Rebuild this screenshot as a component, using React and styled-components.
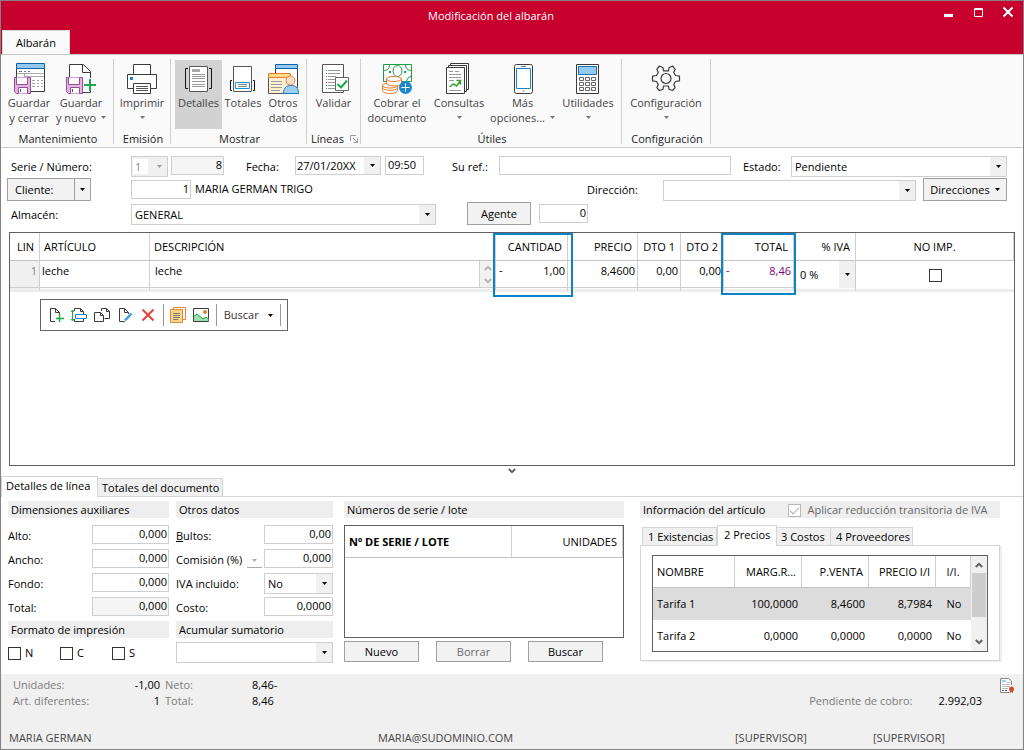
import React from "react";
import styled, { createGlobalStyle, css } from "styled-components";

const GlobalStyle = createGlobalStyle`
  *, *::before, *::after { box-sizing: border-box; }
  body { margin: 0; background: #fff; }
  body, button, input, select, textarea, table {
    font-family: "Open Sans", "Noto Sans", sans-serif;
    font-size: 11px;
    line-height: 16px;
    color: #000;
  }
  button, input, select, textarea { margin: 0; border-radius: 0; }
`;

const Window = styled.main`
  min-height: 100vh;
  display: flex;
  flex-direction: column;
  border: 1px solid #828282;
  background: #fff;
`;

/* ---------- title bar ---------- */
const TitleBar = styled.header`
  height: 53px;
  display: grid;
  grid-template-columns: 1fr auto 1fr;
  background: #c8002d;
`;
const Title = styled.h1`
  margin: 7px 0 0 0;
  padding-right: 42px;
  font-size: 11px;
  font-weight: 400;
  line-height: 16px;
  color: #fff;
`;
const RibbonTab = styled.button`
  align-self: end;
  justify-self: start;
  height: 24px;
  width: 68px;
  margin-left: 1px;
  padding: 0;
  border: 1px solid #d8d8d8;
  border-bottom: 0;
  background: #fafafa;
`;
const WindowButtons = styled.div`
  display: flex;
  justify-content: flex-end;
  gap: 12px;
  padding: 3px 6px 0 0;
  height: 22px;
`;
const WindowButton = styled.button`
  width: 18px;
  height: 18px;
  padding: 0;
  border: 0;
  background: transparent;
  svg { display: block; }
`;

/* ---------- ribbon ---------- */
const Ribbon = styled.nav`
  display: flex;
  height: 94px;
  padding-top: 4px;
  border-top: 1px solid #c9c9c9;
  border-bottom: 1px solid #c9c9c9;
  background: #fafafa;
`;
const Group = styled.section`
  display: flex;
  flex-direction: column;
  height: 85px;
  border-right: 1px solid #cfcfcf;
`;
const GroupButtons = styled.div`
  flex: none;
  display: flex;
  justify-content: center;
  padding: 1px ${(p) => p.$right || 0}px 0 ${(p) => p.$left || 0}px;
  height: 72px;
`;
const GroupTitle = styled.div`
  flex: none;
  display: flex;
  align-items: center;
  justify-content: center;
  gap: 6px;
  height: 16px;
  padding-left: 2px;
  color: #222;
`;
const BigButton = styled.button`
  width: ${(p) => p.$width}px;
  height: 69px;
  padding: 2px 0 0;
  display: flex;
  flex-direction: column;
  align-items: center;
  border: 0;
  background: ${(p) => (p.$active ? "#d2d2d2" : "transparent")};
  color: #444;
  line-height: 15px;
  white-space: nowrap;
  svg { display: block; flex: none; }
`;
const BigIcon = styled.span`
  height: 33px;
`;
const CaptionLine = styled.span`
  display: flex;
  align-items: center;
  gap: 5px;
  height: 15px;
`;

/* ---------- form controls ---------- */
const Field = styled.input`
  width: ${(p) => (p.$width ? `${p.$width}px` : "100%")};
  height: 19px;
  min-width: 0;
  padding: 0 1px 2px 2px;
  border: 1px solid #cfcfcf;
  background: ${(p) => (p.$muted ? "#f5f5f5" : "#fff")};
  text-align: ${(p) => p.$align || "left"};
  outline: 0;
`;
const SelectBox = styled.span`
  position: relative;
  display: inline-flex;
  flex: ${(p) => (p.$width ? "none" : "1")};
  width: ${(p) => (p.$width ? `${p.$width}px` : "auto")};
  height: ${(p) => p.$height || 21}px;
  border: ${(p) => (p.$bare ? "0" : "1px solid #cfcfcf")};
  background: ${(p) => (p.$disabled ? "#f0f0f0" : "#fff")};
`;
const NativeSelect = styled.select`
  appearance: none;
  flex: 1;
  min-width: 0;
  height: 100%;
  padding: 0 18px 0 ${(p) => p.$pad ?? 3}px;
  border: 0;
  background: linear-gradient(#f0f0f0, #f0f0f0) right / 16px 100% no-repeat transparent;
  outline: 0;
  opacity: 1;
  ${(p) => p.disabled && css`
    color: #8a8a8a;
    background: linear-gradient(#fff, #fff) 1px 2px / 15px 15px no-repeat transparent;
  `}
`;
const ArrowSlot = styled.span`
  position: absolute;
  top: 0;
  right: 0;
  width: 16px;
  height: 100%;
  display: flex;
  align-items: center;
  justify-content: center;
  pointer-events: none;
`;
const PushButton = styled.button`
  width: ${(p) => p.$width}px;
  height: ${(p) => p.$height || 23}px;
  padding: 0;
  display: inline-flex;
  align-items: center;
  justify-content: center;
  gap: 5px;
  border: 1px solid #a0a0a0;
  background: #f2f2f2;
  color: ${(p) => (p.disabled ? "#6b6b6b" : "#000")};
`;
const SplitButton = styled.div`
  display: inline-flex;
  width: 84px;
  height: 23px;
  border: 1px solid #a0a0a0;
  background: #f2f2f2;
`;
const SplitPart = styled.button`
  flex: ${(p) => (p.$main ? "1" : "0 0 16px")};
  display: flex;
  align-items: center;
  justify-content: ${(p) => (p.$main ? "flex-start" : "center")};
  padding: 0 0 0 ${(p) => (p.$main ? 7 : 0)}px;
  border: 0;
  border-left: ${(p) => (p.$main ? "0" : "1px solid #a0a0a0")};
  background: transparent;
`;
const Check = styled.input`
  appearance: none;
  flex: none;
  width: 13px;
  height: 13px;
  border: 1px solid #333;
  background: #fff;
  &:disabled { border-color: #b8b8b8; }
  &:checked::after {
    content: "";
    display: block;
    width: 9px;
    height: 5px;
    margin: 2px 0 0 1px;
    border: solid #aaa;
    border-width: 0 0 1px 1px;
    transform: rotate(-45deg);
  }
`;

/* ---------- document header form ---------- */
const DocForm = styled.form`
  padding: 7px 16px 0 6px;
  display: flex;
  flex-direction: column;
`;
const FormRow = styled.div`
  display: flex;
  align-items: flex-start;
  height: ${(p) => p.$height}px;
`;
const FormLabel = styled.label`
  flex: none;
  width: ${(p) => p.$width}px;
  padding: ${(p) => p.$top ?? 4}px 0 0 4px;
  white-space: nowrap;
`;
const Gap = styled.span`
  flex: ${(p) => (p.$grow ? `1 0 ${p.$size}px` : `0 0 ${p.$size}px`)};
`;
const Slot = styled.span`
  display: flex;
  flex: ${(p) => (p.$grow ? `${p.$grow} 1 0` : "none")};
  min-width: 0;
  padding-top: ${(p) => p.$top || 0}px;
`;
const CustomerName = styled.output`
  padding: 3px 0 0 4px;
  white-space: nowrap;
`;

/* ---------- line grid ---------- */
const LinesPanel = styled.section`
  flex: 1;
  margin: 5px 8px 0 8px;
  border: 1px solid #606060;
  min-height: 200px;
`;
const DataTable = styled.table`
  width: 100%;
  table-layout: fixed;
  border-collapse: separate;
  border-spacing: 0;
`;
const HeadCell = styled.th`
  position: relative;
  height: ${(p) => (p.$tall ? 32 : 28)}px;
  padding: 0 ${(p) => (p.$align === "right" ? 5 : 4)}px 0 4px;
  border-right: 1px solid #cfcfcf;
  border-bottom: 1px solid #c4c4c4;
  font-weight: ${(p) => (p.$bold ? 700 : 400)};
  text-align: ${(p) => p.$align || "left"};
  white-space: nowrap;
`;
const Highlight = styled.span`
  position: absolute;
  top: 0;
  left: -3px;
  right: ${(p) => p.$right}px;
  height: ${(p) => p.$height}px;
  border: 2px solid #0b84c6;
  pointer-events: none;
  z-index: 1;
`;
const LineCell = styled.td`
  height: 30px;
  padding: 0;
  border-right: ${(p) => (p.$open ? "0" : "1px solid #cfcfcf")};
  border-bottom: 3px solid #ededed;
  vertical-align: top;
  background: ${(p) => (p.$muted ? "#f0f0f0" : "#fff")};
`;
const CellEdit = styled.span`
  display: flex;
  height: 27px;
  padding: 1px 2px 0 2px;
  border-bottom: 1px solid #cfcfcf;
  color: ${(p) => p.$color || "#000"};
`;
const CellInput = styled.input`
  flex: 1;
  min-width: 0;
  width: 20px;
  height: 17px;
  padding: 0;
  border: 0;
  outline: 0;
  background: transparent;
  color: inherit;
  text-align: ${(p) => p.$align || "left"};
`;
const CellSelect = styled.span`
  display: flex;
  height: 27px;
`;
const CellCheck = styled.span`
  display: flex;
  align-items: center;
  justify-content: center;
  height: 28px;
`;
const Stepper = styled.span`
  flex: 0 0 16px;
  display: flex;
  flex-direction: column;
  align-items: center;
  justify-content: space-around;
  margin: -1px -2px 0 0;
  border-left: 1px solid #cfcfcf;
  background: #f2f2f2;
`;
const LineTools = styled.div`
  display: inline-flex;
  align-items: center;
  height: 32px;
  width: 248px;
  margin: 7px 0 0 30px;
  padding: 0 7px;
  gap: 7px;
  border: 1px solid #666;
`;
const ToolButton = styled.button`
  height: 20px;
  padding: 0;
  display: flex;
  align-items: center;
  gap: 9px;
  border: 0;
  background: transparent;
  color: #333;
`;
const ToolDivider = styled.span`
  width: 1px;
  height: 22px;
  background: #999;
`;
const Splitter = styled.div`
  display: flex;
  justify-content: center;
  align-items: center;
  height: 10px;
`;

/* ---------- bottom panels ---------- */
const Tabs = styled.div`
  display: flex;
  flex: none;
  align-items: flex-end;
  height: 21px;
  padding-left: ${(p) => p.$left || 0}px;
  ${(p) => p.$line && css`box-shadow: inset 0 -1px #d5d5d5;`}
`;
const Tab = styled.button`
  position: relative;
  z-index: ${(p) => (p.$active ? 1 : 0)};
  height: ${(p) => (p.$active ? 21 : 19)}px;
  width: ${(p) => p.$width}px;
  padding: 0 0 ${(p) => (p.$active ? 2 : 0)}px ${(p) => p.$pad ?? 4}px;
  border: 1px solid #d5d5d5;
  border-left-width: ${(p) => (p.$first || p.$active ? 1 : 0)}px;
  border-bottom: ${(p) => (p.$active ? "0" : "1px solid #d5d5d5")};
  background: ${(p) => (p.$active ? "#fff" : "#f0f0f0")};
  text-align: left;
  white-space: nowrap;
`;
const Panels = styled.div`
  display: grid;
  grid-template-columns: 161fr 164fr 291fr 376fr;
  padding: 4px 23px 12px 7px;
  height: 177px;
`;
const Panel = styled.section`
  display: flex;
  flex-direction: column;
  min-width: 0;
  margin-left: ${(p) => p.$left || 0}px;
`;
const PanelTitle = styled.h2`
  display: flex;
  flex: none;
  align-items: center;
  height: 17px;
  margin: 0 0 ${(p) => p.$bottom ?? 7}px;
  padding: 1px 0 0 3px;
  background: #eee;
  font-size: 11px;
  font-weight: 400;
  line-height: 16px;
  white-space: nowrap;
`;
const DetailRow = styled.div`
  display: flex;
  align-items: flex-start;
  height: 24px;
`;
const DetailLabel = styled.label`
  flex: 1;
  padding-top: 3px;
  white-space: nowrap;
`;
const UnitMenu = styled.button`
  width: 15px;
  height: 19px;
  margin-right: 2px;
  padding: 0;
  border: 0;
  border-bottom: 1px solid #aaa;
  background: transparent;
`;
const CheckRow = styled.div`
  display: grid;
  grid-template-columns: repeat(3, 52px);
`;
const CheckLabel = styled.label`
  display: flex;
  align-items: center;
  gap: ${(p) => (p.$muted ? 6 : 4)}px;
  color: ${(p) => (p.$muted ? "#666" : "#000")};
`;
const SeriesBox = styled.div`
  height: 113px;
  border: 1px solid #606060;
`;
const ButtonRow = styled.div`
  display: flex;
  gap: 17px;
  padding-top: 3px;
`;
const TabPage = styled.div`
  height: 116px;
  margin-top: -1px;
  padding: 9px 11px 0 11px;
  border: 1px solid #d5d5d5;
  box-shadow: 2px 1px #eee;
`;
const PriceBox = styled.div`
  display: flex;
  height: 97px;
  border: 1px solid #606060;
  overflow: hidden;
`;
const PriceRow = styled.tr`
  background: ${(p) => (p.$selected ? "#dcdcdc" : "#fff")};
`;
const PriceCell = styled.td`
  height: 32px;
  padding: 0 ${(p) => (p.$align === "right" ? 4 : 3)}px 0 4px;
  text-align: ${(p) => p.$align || "left"};
  white-space: nowrap;
`;
const ScrollBar = styled.div`
  flex: 0 0 16px;
  display: flex;
  flex-direction: column;
  align-items: center;
  padding-bottom: 6px;
  background: #f0f0f0;
`;
const ScrollThumb = styled.span`
  width: 14px;
  height: 44px;
  margin-bottom: auto;
  background: #cdcdcd;
`;
const ScrollArrow = styled.span`
  display: flex;
  align-items: center;
  height: ${(p) => p.$height}px;
`;

/* ---------- status area ---------- */
const Footer = styled.footer`
  height: 75px;
  padding: 3px 8px 0 12px;
  display: flex;
  flex-direction: column;
  background: #f0f0f0;
`;
const Summary = styled.div`
  display: flex;
  justify-content: space-between;
`;
const SummaryGrid = styled.dl`
  display: grid;
  grid-template-columns: 108px 39px 92px 40px;
  margin: 0;
`;
const Term = styled.dt`
  padding-left: ${(p) => p.$left || 0}px;
  color: #7b7b7b;
`;
const Amount = styled.dd`
  margin: 0;
  text-align: ${(p) => p.$align || "left"};
`;
const Pending = styled.dl`
  display: flex;
  gap: 26px;
  margin: 16px 0 0;
`;
const PendingArea = styled.div`
  display: flex;
  align-items: flex-start;
  gap: 17px;
`;
const Session = styled.div`
  display: grid;
  grid-template-columns: 369fr 357fr 138fr 142fr;
  margin: 21px 0 0 -4px;
  color: #444;
`;

/* ---------- icons ---------- */
const Caret = ({ color = "#000" }) => (
  <svg width="5" height="3" viewBox="0 0 5 3" aria-hidden="true">
    <path d="M0 0h5L2.5 3z" fill={color} />
  </svg>
);
const Chevron = ({ up, color = "#606060" }) => (
  <svg width="8" height="6" viewBox="0 0 8 6" fill="none" stroke={color} strokeWidth="2" aria-hidden="true">
    <path d={up ? "M.8 5L4 1.8L7.2 5" : "M.8 1L4 4.2L7.2 1"} />
  </svg>
);
const Svg = ({ children, size = 32 }) => (
  <svg width={size} height={size} viewBox={`0 0 ${size} ${size}`} fill="none" stroke="#3b3b3b" aria-hidden="true">
    {children}
  </svg>
);
const Disk = () => (
  <g stroke="#9b4a9e">
    <path d="M1.5 15.5h16v16h-14l-2-2z" fill="#ddb7dd" />
    <path d="M3.5 15.5v7h11v-7M5.5 31.500v-6h9v6" fill="#fff" />
    <path d="M7.500 27v3" stroke="#555" />
  </g>
);
const SaveCloseIcon = () => (
  <Svg>
    <path d="M3.5 6.500h28v23h-28z" fill="#fff" />
    <path d="M3.500 1.500h28v5h-28z" fill="#94c9f0" stroke="#0c61ab" />
    <path d="M6 9.500h3m2 0h2m2 0h2" stroke="#777" />
    <path d="M4 11.500h27M11.500 11.500v5M11 14.500h20" stroke="#aaa" />
    <path d="M19 18.500h3m2 0h2m2 0h2M19 21.500h3m2 0h2m2 0h2M19 24.500h3m2 0h2m2 0h2" stroke="#aaa" />
    <Disk />
  </Svg>
);
const SaveNewIcon = () => (
  <Svg>
    <path d="M4.500 2.500h14l7 7v21h-21z" fill="#fff" />
    <path d="M17.500 2.500v8h8" />
    <path d="M21 16h9v13h-9z" fill="#fafafa" stroke="none" />
    <Disk />
    <path d="M25 17v12M19 23h12" stroke="#1ba94c" strokeWidth="2" />
  </Svg>
);
const PrintIcon = () => (
  <Svg>
    <path d="M7.500 12.500v-10h17v10" fill="#fff" />
    <path d="M7.500 26.500h-6v-14h29v14h-6" fill="#fff" />
    <path d="M7.500 21.500h17v10h-17z" fill="#fff" />
    <path d="M10 24.500h12m-12 2h12m-12 2h12" stroke="#555" />
    <path d="M4 15h3v3H4z" fill="#1b83cb" stroke="none" />
  </Svg>
);
const DetailsIcon = () => (
  <Svg>
    <path d="M6.500 4.500h18v25h-18z" fill="#fff" stroke="#555" />
    <path d="M9 7h8v3H9z" fill="#aaa" stroke="none" />
    <path d="M9 12.500h13m-13 2h13m-13 2h13m-13 3h13m-13 3h13m-13 2h13" stroke="#999" />
    <path d="M5 6.500H2.500v20H5M26 6.500h2.500v20H26" stroke="#111" />
  </Svg>
);
const TotalsIcon = () => (
  <Svg>
    <path d="M6.500 4.500h18v25h-18z" fill="#fff" stroke="#555" />
    <path d="M8.500 20.500h14v6h-14z" stroke="#1592d8" />
    <path d="M11 22.500h9m-9 2h9" stroke="#888" />
    <path d="M5 18.500H3.500v10H5M26 18.500h1.500v10H26" stroke="#111" />
  </Svg>
);
const OtherDataIcon = () => (
  <Svg>
    <path d="M8.500 6.500h22v19h-22z" fill="#fff" />
    <path d="M8.500 2.500h22v4h-22z" fill="#94c9f0" stroke="#0c61ab" />
    <path d="M1.500 15.500h21v16h-21z" fill="#fcefd3" stroke="#555" />
    <path d="M1.500 11.500h22v4h-22z" fill="#fadb87" stroke="#e77c2e" />
    <path d="M4 19.500h11m-11 3h11m-11 3h11m-11 3h9" stroke="#999" />
    <path d="M16.500 31.500c0-6 3-8 7.500-8s7.500 2 7.500 8z" fill="#9fd0f2" stroke="#1b78bd" />
    <circle cx="23.500" cy="18.500" r="4.500" fill="#fcdcc0" stroke="#d48d57" />
  </Svg>
);
const ValidateIcon = () => (
  <Svg>
    <path d="M4.500 2.500h21v28h-21z" fill="#fff" stroke="#555" />
    <path d="M10 8.500h12m-12 3h12m-12 3h8m-8 3h7m-7 3h7m-7 3h7m-7 3h7" stroke="#999" />
    <path d="M8.500 8v1m0 5v1m0 2v1m0 5v1m0 2v1" stroke="#1ba94c" />
    <path d="M8.500 11v1m0 8v1" stroke="#d13438" />
    <path d="M17.500 15.500h13v13h-13z" fill="#fff" stroke="#666" />
    <path d="M19.500 22l3.500 3.500l6-7" stroke="#1ba94c" strokeWidth="2" />
  </Svg>
);
const CashIcon = () => (
  <Svg>
    <path d="M2.500 2.500h28v17h-28z" fill="#fff" stroke="#1b9e4b" />
    <path d="M2.500 8.500q6 0 6-6m16 0q0 6 6 6M30.500 14q-4 1-5 5" stroke="#1b9e4b" />
    <ellipse cx="16.500" cy="9" rx="4.500" ry="5.500" stroke="#1b9e4b" />
    <path d="M8 10h2m13 0h2" stroke="#1b9e4b" strokeWidth="2" />
    <g fill="#fff" stroke="#e77c2e">
      <path d="M1.500 23v5.500c0 4 15 4 15 0V23z" />
      <path d="M1.500 26c1 3 14 3 15 0" />
      <ellipse cx="9" cy="23.500" rx="7.500" ry="2.500" />
      <path d="M5.500 17v4c0 4 15 4 15 0v-4z" />
      <ellipse cx="13" cy="17" rx="7.500" ry="2.500" />
    </g>
    <circle cx="24.500" cy="25.500" r="6.500" fill="#1b87d0" stroke="none" />
    <path d="M24.500 21.500v8m-4-4h8" stroke="#fff" />
  </Svg>
);
const QueriesIcon = () => (
  <Svg>
    <path d="M7.500 1.500h18v26h-18z" fill="#fff" />
    <path d="M5.500 3.500h18v26h-18z" fill="#fff" />
    <path d="M3.500 5.500h18v26h-18z" fill="#fff" />
    <path d="M6 9.500h4m2 0h4M6 12.500h12M6 15.500h12M6 18.500h5M6 28.500h12" stroke="#999" />
    <path d="M6.500 25l4-3l3 2l4-5m-4-.5h4v4" stroke="#2ea02c" strokeWidth="1.500" />
  </Svg>
);
const PhoneIcon = () => (
  <Svg>
    <rect x="7.500" y="2.500" width="18" height="29" rx="2" fill="#fff" />
    <path d="M9.500 6.500h14v20h-14z" stroke="#1b83cb" />
    <path d="M14 4.500h5M15.500 29h2" stroke="#777" />
  </Svg>
);
const CalcIcon = () => (
  <Svg>
    <path d="M4.500 2.500h22v29h-22z" fill="#fff" />
    <path d="M6.500 4.500h18v8h-18z" fill="#94c9f0" stroke="#1c6fb5" />
    <path d="M7.500 15.500h4v3h-4zm6 0h4v3h-4zm6 0h4v3h-4zm-12 5h4v3h-4zm6 0h4v3h-4zm6 0h4v3h-4zm-12 5h4v3h-4zm6 0h4v3h-4zm6 0h4v3h-4z" stroke="#666" />
  </Svg>
);
const GearIcon = () => (
  <Svg>
    <path
      d="M9.500 4l3.500 1.800l.5 3h5l.5-3L22.500 4l2.700 3.300l-1.500 3.200l1.800 3l4 .7v4.600l-4 .7l-1.800 3l1.500 3.200l-2.700 2.800l-3.500-1.300l-.5-3.200h-5l-.5 3.200l-3.500 1.300l-2.700-2.800l1.500-3.200l-1.800-3l-4-.7v-4.600l4-.7l1.800-3l-1.500-3.200z"
      strokeWidth="1.200"
      strokeLinejoin="round"
    />
    <circle cx="16" cy="16.500" r="5" strokeWidth="1.200" />
  </Svg>
);
const AddLineIcon = () => (
  <Svg size={16}>
    <path d="M7 14.500H2.500v-13h5l4 4V7M7.500 1.500v4h4" />
    <path d="M11.500 7v8M8 11.500h8" stroke="#1ba94c" strokeWidth="1.500" />
  </Svg>
);
const InsertLineIcon = () => (
  <Svg size={16}>
    <path d="M3.500 4V1.500h6l3 3V7M9.500 1.500v3h3M3.500 12v2.500h9V12" />
    <path d="M4.500 7.500h11v4h-11z" fill="#fff" stroke="#1b83cb" />
    <path d="M1.500 3v11M0 5l1.500-2L3 5M0 12l1.500 2L3 12" stroke="#1ba94c" />
  </Svg>
);
const CopyIcon = () => (
  <Svg size={16}>
    <path d="M7.500 4V1.500h5l3 3v7h-5M12.500 1.500v3h3" />
    <path d="M.500 5.500h6l3 3v6h-9zM6.500 5.500v3h3" fill="#fff" />
  </Svg>
);
const EditIcon = () => (
  <Svg size={16}>
    <path d="M7 14.500H2.500v-13h5l4 4V7M7.500 1.500v4h4" />
    <path d="M8 13.500l6.500-7" stroke="#3f9be0" strokeWidth="2.500" />
    <path d="M6.500 15l1.500-.5" stroke="#1b6fb5" />
  </Svg>
);
const DeleteIcon = () => (
  <Svg size={16}>
    <path d="M2.500 2.500l11 11M13.500 2.500l-11 11" stroke="#e8413c" strokeWidth="2" />
  </Svg>
);
const NotesIcon = () => (
  <Svg size={16}>
    <path d="M3.500 3V.500h12v12H13" stroke="#e08a35" />
    <path d="M.500 2.500h12v13H.5z" fill="#fad58a" stroke="#e08a35" />
    <path d="M3 6.500h7M3 8.500h7M3 10.500h7M3 12.500h5" stroke="#777" />
  </Svg>
);
const ImageIcon = () => (
  <Svg size={16}>
    <path d="M.5 1.500h15v13H.5z" fill="#fff" />
    <path d="M1 9l3-2l6 5l3-2l2.500 2v2H1z" fill="#9be0b0" stroke="none" />
    <path d="M1 9l3-2l6 5l3-2l2.500 2" stroke="#1b9e4b" />
    <circle cx="12" cy="5" r="2" fill="#e77c2e" stroke="none" />
  </Svg>
);
const CertificateIcon = () => (
  <Svg size={16}>
    <path d="M12.500 8V4l-3-2.500h-8v14h9" fill="#fff" stroke="#888" />
    <path d="M3 4h4" stroke="#8fd0f4" strokeWidth="2" />
    <path d="M8 5.500h3M3 7.500h8M3 9.500h8M3 11.500h6" stroke="#bbb" />
    <path d="M3 13.500h6" stroke="#3d6aa8" strokeDasharray="2 1" />
    <circle cx="12.500" cy="12" r="2.500" fill="#d4492c" stroke="none" />
    <path d="M11 13h3v3l-1.500-1L11 16z" fill="#d4492c" stroke="none" />
  </Svg>
);
const LauncherIcon = () => (
  <svg width="8" height="8" viewBox="0 0 8 8" fill="none" stroke="#999" aria-hidden="true">
    <path d="M.500 6V.500H6M3 3l4 4M7.500 3.500v4h-4" />
  </svg>
);

/* ---------- composed parts ---------- */
const Select = ({ id, value, label, pad, caret = "#000", ...box }) => (
  <SelectBox {...box}>
    <NativeSelect id={id} aria-label={label} disabled={box.$disabled} defaultValue={value} $pad={pad}>
      <option>{value}</option>
    </NativeSelect>
    <ArrowSlot><Caret color={caret} /></ArrowSlot>
  </SelectBox>
);

const RibbonButton = ({ icon, lines, menu, width, active }) => (
  <BigButton type="button" $width={width} $active={active}>
    <BigIcon>{icon}</BigIcon>
    {lines.map((line, i) => (
      <CaptionLine key={line}>
        {line}
        {menu && i === 1 && <Caret color="#777" />}
      </CaptionLine>
    ))}
    {menu && lines.length === 1 && <CaptionLine><Caret color="#777" /></CaptionLine>}
  </BigButton>
);

const groups = [
  { title: "Mantenimiento", left: 2, right: 6, buttons: [
    { icon: <SaveCloseIcon />, lines: ["Guardar", "y cerrar"], width: 52 },
    { icon: <SaveNewIcon />, lines: ["Guardar", "y nuevo"], width: 52, menu: true },
  ] },
  { title: "Emisión", buttons: [{ icon: <PrintIcon />, lines: ["Imprimir"], width: 56, menu: true }] },
  { title: "Mostrar", left: 4, right: 4, buttons: [
    { icon: <DetailsIcon />, lines: ["Detalles"], width: 47, active: true },
    { icon: <TotalsIcon />, lines: ["Totales"], width: 42 },
    { icon: <OtherDataIcon />, lines: ["Otros", "datos"], width: 38 },
  ] },
  { title: "Líneas", launcher: true, buttons: [{ icon: <ValidateIcon />, lines: ["Validar"], width: 53 }] },
  { title: "Útiles", right: 5, buttons: [
    { icon: <CashIcon />, lines: ["Cobrar el", "documento"], width: 72 },
    { icon: <QueriesIcon />, lines: ["Consultas"], width: 52, menu: true },
    { icon: <PhoneIcon />, lines: ["Más", "opciones..."], width: 75, menu: true },
    { icon: <CalcIcon />, lines: ["Utilidades"], width: 56, menu: true },
  ] },
  { title: "Configuración", buttons: [{ icon: <GearIcon />, lines: ["Configuración"], width: 88, menu: true }] },
];

const lineColumns = [72, 70, 43, 43, 70, 62, 158];
const priceColumns = [67, 67, 67, 35];

const tariffs = [
  ["Tarifa 1", "100,0000", "8,4600", "8,7984", "No"],
  ["Tarifa 2", "0,0000", "0,0000", "0,0000", "No"],
];

const NumberRow = ({ id, label, value, width, muted }) => (
  <DetailRow>
    <DetailLabel htmlFor={id}>{label}</DetailLabel>
    <Field id={id} defaultValue={value} $width={width} $align="right" $muted={muted} />
  </DetailRow>
);

export default function App() {
  return (
    <Window>
      <GlobalStyle />
      <TitleBar>
        <RibbonTab type="button">Albarán</RibbonTab>
        <Title>Modificación del albarán</Title>
        <WindowButtons>
          <WindowButton type="button" aria-label="Minimizar">
            <svg width="18" height="18"><path d="M5 10h9v3H5z" fill="#fff" /></svg>
          </WindowButton>
          <WindowButton type="button" aria-label="Maximizar">
            <svg width="18" height="18" fill="none" stroke="#fff"><path d="M5.500 4.500h8v8h-8zM5 5.500h9" /></svg>
          </WindowButton>
          <WindowButton type="button" aria-label="Cerrar">
            <svg width="18" height="18" stroke="#fff" strokeWidth="2"><path d="M4.500 3.500l9 9M13.500 3.500l-9 9" /></svg>
          </WindowButton>
        </WindowButtons>
      </TitleBar>

      <Ribbon>
        {groups.map((g) => (
          <Group key={g.title}>
            <GroupButtons $left={g.left} $right={g.right}>
              {g.buttons.map((b) => <RibbonButton key={b.lines.join(" ")} {...b} />)}
            </GroupButtons>
            <GroupTitle>{g.title}{g.launcher && <LauncherIcon />}</GroupTitle>
          </Group>
        ))}
      </Ribbon>

      <DocForm>
        <FormRow $height={23}>
          <FormLabel htmlFor="serie" $width={124}>Serie / Número:</FormLabel>
          <Slot $top={1}>
            <Select id="serie" value="1" $width={37} $disabled caret="#999" />
            <Gap $size={3} />
            <Field aria-label="Número" defaultValue="8" $width={53} $align="right" $muted />
          </Slot>
          <Gap $size={18} />
          <FormLabel htmlFor="fecha" $width={53}>Fecha:</FormLabel>
          <Slot $top={1}>
            <Select id="fecha" value="27/01/20XX" $width={86} $height={19} pad={1} />
            <Gap $size={4} />
            <Field aria-label="Hora" defaultValue="09:50" $width={39} />
          </Slot>
          <Gap $size={24} />
          <FormLabel htmlFor="ref" $width={51}>Su ref.:</FormLabel>
          <Slot $top={1} $grow={232}><Field id="ref" /></Slot>
          <Gap $size={8} />
          <FormLabel htmlFor="estado" $width={52}>Estado:</FormLabel>
          <Slot $top={1} $grow={216}><Select id="estado" value="Pendiente" /></Slot>
        </FormRow>
        <FormRow $height={24}>
          <SplitButton>
            <SplitPart type="button" $main>Cliente:</SplitPart>
            <SplitPart type="button" aria-label="Opciones de cliente"><Caret /></SplitPart>
          </SplitButton>
          <Gap $size={40} />
          <Slot $top={2}><Field aria-label="Código de cliente" defaultValue="1" $width={60} $align="right" /></Slot>
          <CustomerName>MARIA GERMAN TRIGO</CustomerName>
          <Gap $size={20} $grow />
          <FormLabel htmlFor="direccion" $width={80}>Dirección:</FormLabel>
          <Slot $top={2}><Select id="direccion" value="" $width={253} /></Slot>
          <Gap $size={7} />
          <PushButton type="button" $width={84}>Direcciones <Caret /></PushButton>
        </FormRow>
        <FormRow $height={25}>
          <FormLabel htmlFor="almacen" $width={124} $top={5}>Almacén:</FormLabel>
          <Slot $top={2}><Select id="almacen" value="GENERAL" $width={305} /></Slot>
          <Gap $size={31} />
          <PushButton type="button" $width={64}>Agente</PushButton>
          <Gap $size={8} />
          <Slot $top={2}><Field aria-label="Código de agente" defaultValue="0" $width={49} $align="right" /></Slot>
        </FormRow>
      </DocForm>

      <LinesPanel>
        <DataTable>
          <colgroup>
            <col style={{ width: 30 }} />
            <col style={{ width: 110 }} />
            <col />
            {lineColumns.map((w, i) => <col key={i} style={{ width: w }} />)}
          </colgroup>
          <thead>
            <tr>
              <HeadCell $align="right">LIN</HeadCell>
              <HeadCell>ARTÍCULO</HeadCell>
              <HeadCell>DESCRIPCIÓN</HeadCell>
              <HeadCell $align="right">CANTIDAD<Highlight $right={-6} $height={64} /></HeadCell>
              <HeadCell $align="right">PRECIO</HeadCell>
              <HeadCell $align="right">DTO 1</HeadCell>
              <HeadCell $align="right">DTO 2</HeadCell>
              <HeadCell $align="right">TOTAL<Highlight $right={-3} $height={62} /></HeadCell>
              <HeadCell $align="right">% IVA</HeadCell>
              <HeadCell $align="center">NO IMP.</HeadCell>
            </tr>
          </thead>
          <tbody>
            <tr>
              <LineCell $muted><CellEdit $color="#808080"><CellInput aria-label="Línea" defaultValue="1" $align="right" /></CellEdit></LineCell>
              <LineCell><CellEdit><CellInput aria-label="Artículo" defaultValue="leche" /></CellEdit></LineCell>
              <LineCell>
                <CellEdit>
                  <Gap $size={3} />
                  <CellInput aria-label="Descripción" defaultValue="leche" />
                  <Stepper><Chevron up color="#b5b5b5" /><Chevron color="#b5b5b5" /></Stepper>
                </CellEdit>
              </LineCell>
              <LineCell><CellEdit><Gap $size={1} />-<CellInput aria-label="Cantidad" defaultValue="1,00" $align="right" /></CellEdit></LineCell>
              <LineCell><CellEdit><CellInput aria-label="Precio" defaultValue="8,4600" $align="right" /></CellEdit></LineCell>
              <LineCell><CellEdit><CellInput aria-label="Descuento 1" defaultValue="0,00" $align="right" /></CellEdit></LineCell>
              <LineCell><CellEdit><CellInput aria-label="Descuento 2" defaultValue="0,00" $align="right" /></CellEdit></LineCell>
              <LineCell><CellEdit $color="#800080">-<CellInput aria-label="Total" defaultValue="8,46" $align="right" /></CellEdit></LineCell>
              <LineCell><CellSelect><Select label="% IVA" value="0 %" pad={6} $bare $height={27} /></CellSelect></LineCell>
              <LineCell $open><CellCheck><Check type="checkbox" aria-label="No imprimir" /></CellCheck></LineCell>
            </tr>
          </tbody>
        </DataTable>
        <LineTools>
          <ToolButton type="button" aria-label="Nueva línea"><AddLineIcon /></ToolButton>
          <ToolButton type="button" aria-label="Insertar línea"><InsertLineIcon /></ToolButton>
          <ToolButton type="button" aria-label="Duplicar línea"><CopyIcon /></ToolButton>
          <ToolButton type="button" aria-label="Modificar línea"><EditIcon /></ToolButton>
          <ToolButton type="button" aria-label="Eliminar línea"><DeleteIcon /></ToolButton>
          <ToolDivider />
          <ToolButton type="button" aria-label="Notas"><NotesIcon /></ToolButton>
          <ToolButton type="button" aria-label="Imagen"><ImageIcon /></ToolButton>
          <ToolDivider />
          <ToolButton type="button">Buscar <Caret /></ToolButton>
          <ToolDivider />
        </LineTools>
      </LinesPanel>
      <Splitter><Chevron /></Splitter>

      <Tabs $line>
        <Tab type="button" $active $first $width={97}>Detalles de línea</Tab>
        <Tab type="button" $width={125}>Totales del documento</Tab>
      </Tabs>

      <Panels>
        <Panel>
          <PanelTitle>Dimensiones auxiliares</PanelTitle>
          <NumberRow id="alto" label="Alto:" value="0,000" width={77} />
          <NumberRow id="ancho" label="Ancho:" value="0,000" width={77} />
          <NumberRow id="fondo" label="Fondo:" value="0,000" width={77} />
          <NumberRow id="dimTotal" label="Total:" value="0,000" width={77} muted />
          <PanelTitle>Formato de impresión</PanelTitle>
          <CheckRow>
            {["N", "C", "S"].map((n) => (
              <CheckLabel key={n}><Check type="checkbox" />{n}</CheckLabel>
            ))}
          </CheckRow>
        </Panel>

        <Panel $left={7}>
          <PanelTitle>Otros datos</PanelTitle>
          <DetailRow>
            <DetailLabel htmlFor="bultos"><u>B</u>ultos:</DetailLabel>
            <Field id="bultos" defaultValue="0,00" $width={69} $align="right" />
          </DetailRow>
          <DetailRow>
            <DetailLabel htmlFor="comision">Comisión (%)</DetailLabel>
            <UnitMenu type="button" aria-label="Tipo de comisión"><Caret color="#aaa" /></UnitMenu>
            <Field id="comision" defaultValue="0,000" $width={69} $align="right" />
          </DetailRow>
          <DetailRow>
            <DetailLabel htmlFor="iva">IVA incluido:</DetailLabel>
            <Select id="iva" value="No" $width={69} />
          </DetailRow>
          <NumberRow id="costo" label="Costo:" value="0,0000" width={69} />
          <PanelTitle $bottom={4}>Acumular sumatorio</PanelTitle>
          <DetailRow><Select label="Acumular sumatorio" value="" /></DetailRow>
        </Panel>

        <Panel $left={11}>
          <PanelTitle>Números de serie / lote</PanelTitle>
          <SeriesBox>
            <DataTable>
              <colgroup><col style={{ width: "60%" }} /><col /></colgroup>
              <thead>
                <tr>
                  <HeadCell $tall $bold>Nº DE SERIE / LOTE</HeadCell>
                  <HeadCell $tall $align="right">UNIDADES</HeadCell>
                </tr>
              </thead>
            </DataTable>
          </SeriesBox>
          <ButtonRow>
            <PushButton type="button" $width={75} $height={21}>Nuevo</PushButton>
            <PushButton type="button" $width={75} $height={21} disabled>Borrar</PushButton>
            <PushButton type="button" $width={75} $height={21}>Buscar</PushButton>
          </ButtonRow>
        </Panel>

        <Panel $left={16}>
          <PanelTitle>
            Información del artículo
            <Gap $size={23} />
            <CheckLabel $muted><Check type="checkbox" defaultChecked disabled />Aplicar reducción transitoria de IVA</CheckLabel>
          </PanelTitle>
          <Tabs $left={2}>
            <Tab type="button" $first $width={75} $pad={5}>1 Existencias</Tab>
            <Tab type="button" $active $width={60} $pad={6}>2 Precios</Tab>
            <Tab type="button" $width={54}>3 Costos</Tab>
            <Tab type="button" $width={82} $pad={5}>4 Proveedores</Tab>
          </Tabs>
          <TabPage>
            <PriceBox>
              <DataTable>
                <colgroup>
                  <col />
                  {priceColumns.map((w, i) => <col key={i} style={{ width: w }} />)}
                </colgroup>
                <thead>
                  <tr>
                    <HeadCell $tall>NOMBRE</HeadCell>
                    <HeadCell $tall $align="right">MARG.R...</HeadCell>
                    <HeadCell $tall $align="right">P.VENTA</HeadCell>
                    <HeadCell $tall $align="right">PRECIO I/I</HeadCell>
                    <HeadCell $tall $align="center">I/I.</HeadCell>
                  </tr>
                </thead>
                <tbody>
                  {tariffs.map((row, r) => (
                    <PriceRow key={row[0]} $selected={r === 0}>
                      {row.map((cell, c) => (
                        <PriceCell key={c} $align={c === 0 ? "left" : c === 4 ? "center" : "right"}>{cell}</PriceCell>
                      ))}
                    </PriceRow>
                  ))}
                </tbody>
              </DataTable>
              <ScrollBar>
                <ScrollArrow $height={17}><Chevron up /></ScrollArrow>
                <ScrollThumb />
                <ScrollArrow $height={6}><Chevron /></ScrollArrow>
              </ScrollBar>
            </PriceBox>
          </TabPage>
        </Panel>
      </Panels>

      <Footer>
        <Summary>
          <SummaryGrid>
            <Term>Unidades:</Term>
            <Amount $align="right">-1,00</Amount>
            <Term $left={5}>Neto:</Term>
            <Amount>8,46-</Amount>
            <Term>Art. diferentes:</Term>
            <Amount $align="right">1</Amount>
            <Term $left={5}>Total:</Term>
            <Amount>8,46</Amount>
          </SummaryGrid>
          <PendingArea>
            <Pending>
              <Term>Pendiente de cobro:</Term>
              <Amount>2.992,03</Amount>
            </Pending>
            <CertificateIcon />
          </PendingArea>
        </Summary>
        <Session>
          <span>MARIA GERMAN</span>
          <span>MARIA@SUDOMINIO.COM</span>
          <span>[SUPERVISOR]</span>
          <span>[SUPERVISOR]</span>
        </Session>
      </Footer>
    </Window>
  );
}
